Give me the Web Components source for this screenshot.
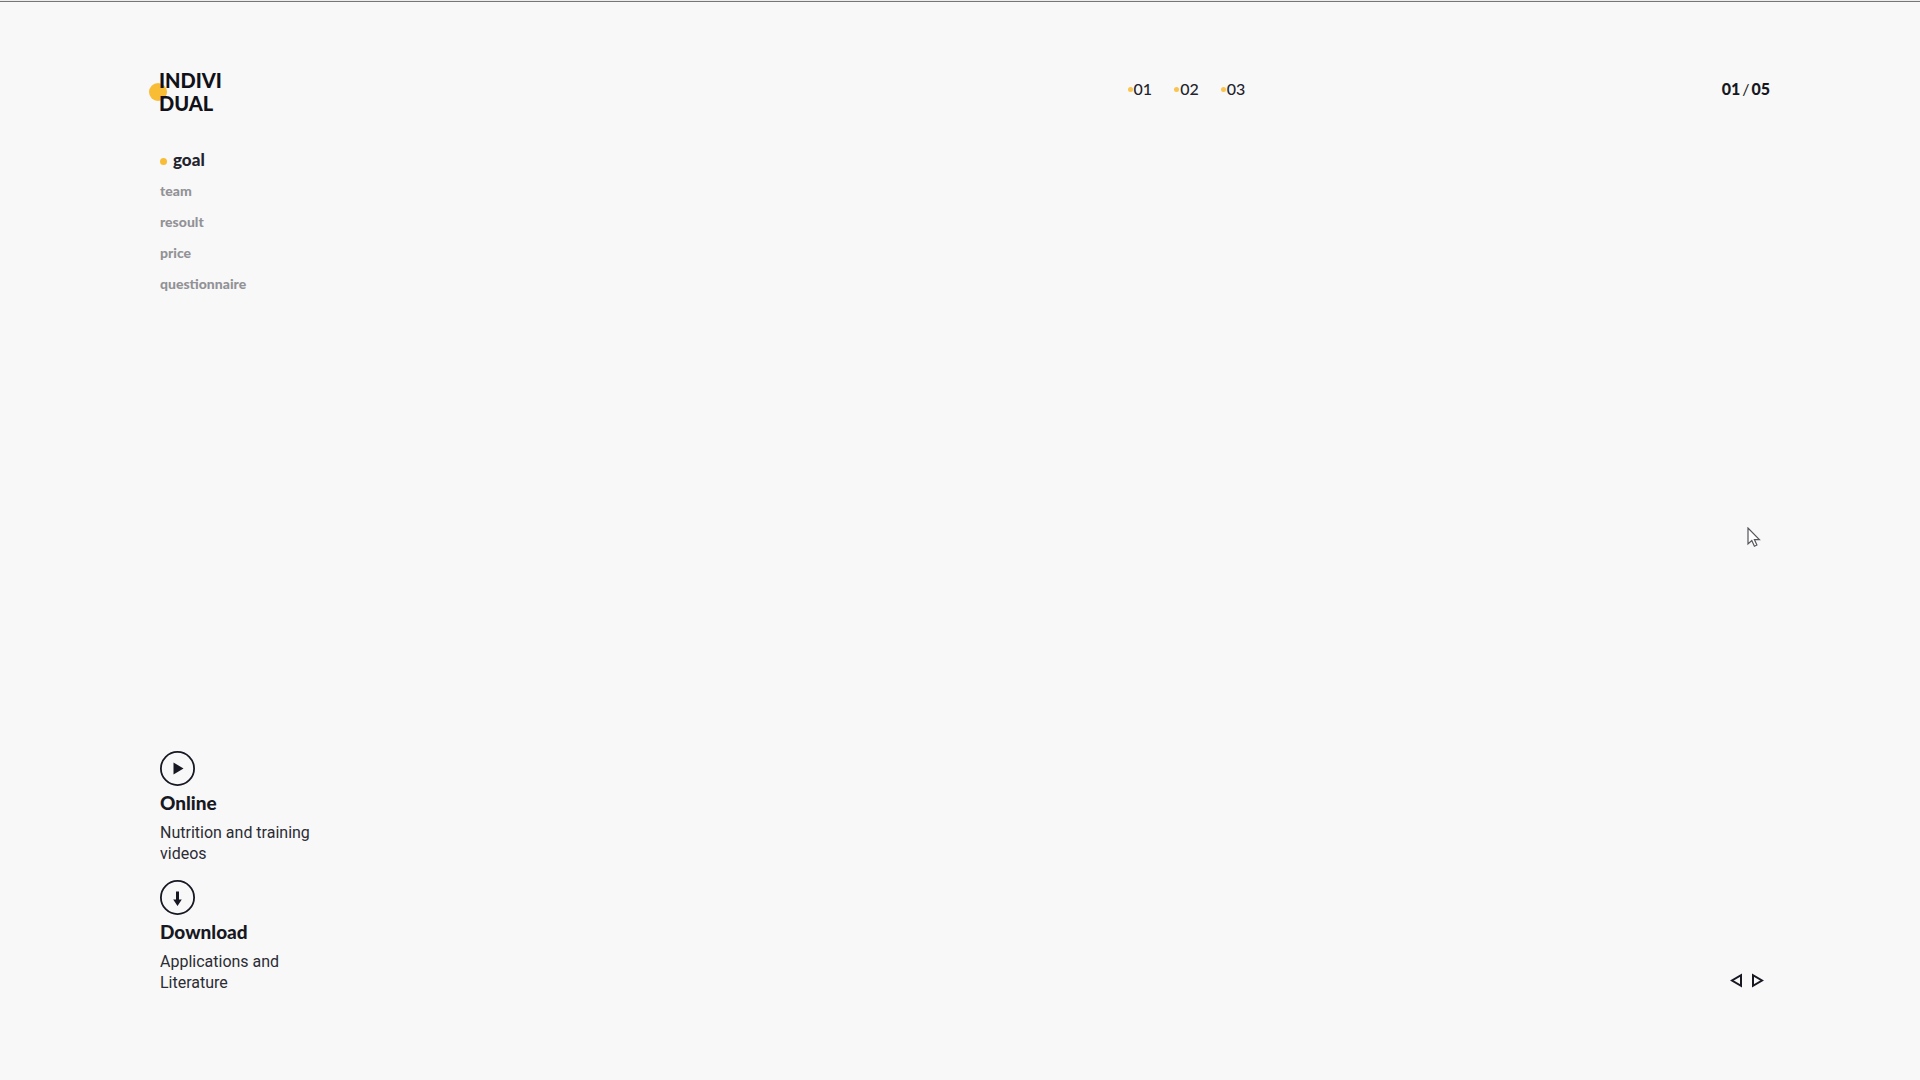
<!DOCTYPE html>
<html lang="en">
<head>
<meta charset="utf-8">
<title>Individual</title>
<style>
  body { margin: 0; background: #f8f8f8; color: #171822; font-family: Lato, "Open Sans", sans-serif; }
</style>
</head>
<body>
<app-page>
  <brand-logo slot="logo"></brand-logo>
  <step-nav slot="steps"></step-nav>
  <page-count slot="count" current="01" total="05"></page-count>
  <side-menu slot="menu"></side-menu>
  <info-card slot="cards" icon="play" heading="Online">Nutrition and training videos</info-card>
  <info-card slot="cards" icon="download" heading="Download">Applications and Literature</info-card>
  <slide-pager slot="pager"></slide-pager>
</app-page>
<mouse-pointer></mouse-pointer>
<script>
const define = (name, html) => customElements.define(name, class extends HTMLElement {
  constructor() {
    super();
    this.attachShadow({ mode: 'open' });
  }
  connectedCallback() {
    this.shadowRoot.innerHTML = typeof html === 'function' ? html(this) : html;
  }
});

define('app-page', `
  <style>
    :host { display: flex; flex-direction: column; min-height: 100vh; box-sizing: border-box; border-top: 1px solid #ededed; }
    .rule { height: 1px; background: #777; }
    header { display: grid; grid-template-columns: 3fr 2fr; padding: 67px 150px 0 159px; }
    .right { display: flex; justify-content: space-between; align-items: flex-start; padding-top: 8px; }
    aside { padding: 29px 160px 0; flex: 1; }
    footer { display: flex; justify-content: space-between; align-items: flex-end; padding: 0 156px 87px 160px; }
    .cards { display: flex; flex-direction: column; gap: 16px; }
    .pager { padding-bottom: 5px; }
  </style>
  <div class="rule"></div>
  <header>
    <slot name="logo"></slot>
    <div class="right"><slot name="steps"></slot><slot name="count"></slot></div>
  </header>
  <aside><slot name="menu"></slot></aside>
  <footer>
    <div class="cards"><slot name="cards"></slot></div>
    <div class="pager"><slot name="pager"></slot></div>
  </footer>`);

define('brand-logo', `
  <style>
    :host { display: block; }
    a { position: relative; display: inline-block; color: #101119; font-size: 20px; line-height: 23px; font-weight: 900; text-decoration: none; }
    a::before { content: ""; position: absolute; z-index: -1; left: -10px; top: 14px; width: 18px; height: 18px; border-radius: 50%; background: #f8bd35; }
  </style>
  <a href="#">INDIVI<br>DUAL</a>`);

define('step-nav', `
  <style>
    :host { display: block; }
    nav { display: flex; gap: 22px; padding-left: 2px; }
    a { display: flex; align-items: center; gap: 1px; color: #22232c; font-size: 16px; line-height: 24px; font-weight: 500; text-decoration: none; }
    a::before { content: ""; width: 5px; height: 5px; border-radius: 50%; background: #f9c44f; }
  </style>
  <nav aria-label="Steps"><a href="#1">01</a><a href="#2">02</a><a href="#3">03</a></nav>`);

define('page-count', el => `
  <style>:host { display: flex; gap: 2px; font-size: 16px; line-height: 24px; font-weight: 900; } i { font-style: normal; font-weight: 400; }</style>
  <span>${el.getAttribute('current')}</span><i>/</i><span>${el.getAttribute('total')}</span>`);

define('side-menu', `
  <style>
    :host { display: block; }
    nav { display: flex; flex-direction: column; align-items: flex-start; }
    a { display: flex; align-items: center; color: #929297; font-size: 14px; line-height: 31px; font-weight: 900; text-decoration: none; }
    .on { color: #22232c; font-size: 17px; gap: 6px; }
    .on::before { content: ""; width: 7px; height: 7px; margin-top: 3px; border-radius: 50%; background: #f8bd35; }
  </style>
  <nav aria-label="Sections">
    <a class="on" href="#goal" aria-current="page">goal</a>
    <a href="#team">team</a>
    <a href="#resoult">resoult</a>
    <a href="#price">price</a>
    <a href="#questionnaire">questionnaire</a>
  </nav>`);

const glyphs = {
  play: '<path d="M14 12 24 18 14 24Z" fill="currentColor"/>',
  download: '<path d="M16.5 12h3v8h2.8L18 26.5 13.7 20h2.8Z" fill="currentColor"/>'
};
define('info-card', el => `
  <style>
    :host { display: block; width: 170px; }
    button { display: block; padding: 0; border: 0; background: none; color: inherit; }
    svg { display: block; }
    h2 { margin: 4px 0 0; font-size: 19px; line-height: 26px; font-weight: 900; }
    p { margin: 6px 0 0; color: #2b2c34; font: 16px/21px Roboto, sans-serif; }
  </style>
  <button aria-label="${el.getAttribute('heading')}">
    <svg width="35" height="35" viewBox="0.5 0.5 35 35"><circle cx="18" cy="18" r="16.6" fill="none" stroke="currentColor" stroke-width="1.8"/>${glyphs[el.getAttribute('icon')]}</svg>
  </button>
  <h2>${el.getAttribute('heading')}</h2>
  <p><slot></slot></p>`);

define('slide-pager', `
  <style>
    :host { display: flex; gap: 8px; }
    button { padding: 0; border: 0; background: none; color: inherit; }
    svg { display: block; }
  </style>
  <button aria-label="Previous"><svg width="13" height="15" viewBox="0 0 13 15"><path d="M11 2.2v10.6L2 7.5Z" fill="none" stroke="currentColor" stroke-width="2"/></svg></button>
  <button aria-label="Next"><svg width="13" height="15" viewBox="0 0 13 15"><path d="M2 2.2v10.6L11 7.5Z" fill="none" stroke="currentColor" stroke-width="2"/></svg></button>`);

define('mouse-pointer', `
  <style>:host { position: absolute; left: 91%; top: 527px; } svg { display: block; }</style>
  <svg width="14" height="21" viewBox="0 0 14 21"><path d="M1 1v16l3.8-3.5 2.6 5.7 2.5-1.2-2.5-5.4h5Z" fill="#fff" stroke="#55565c" stroke-width="1.2"/></svg>`);
</script>
</body>
</html>
